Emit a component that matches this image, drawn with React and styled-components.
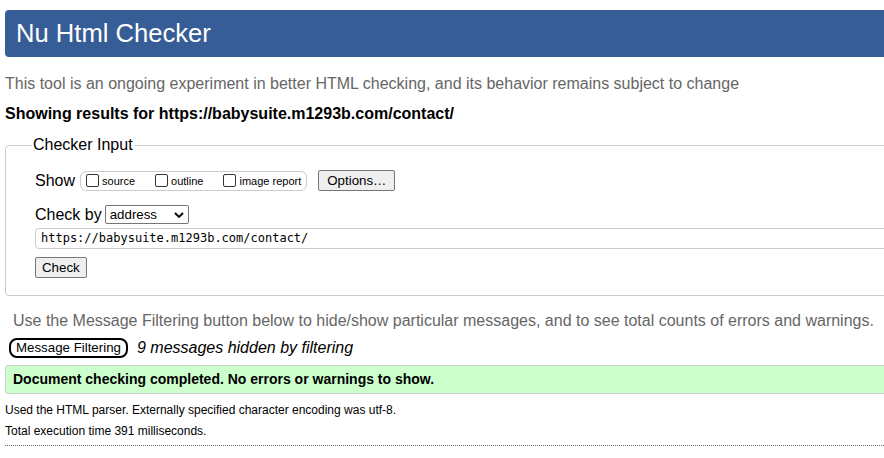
import React from 'react';
import styled, { createGlobalStyle } from 'styled-components';

const GlobalStyle = createGlobalStyle`
  html, body {
    margin: 0;
    padding: 0;
    background: #fff;
    overflow: hidden;
  }
  body {
    font-family: "Liberation Sans", Arial, sans-serif;
    color: #000;
  }
`;

const Page = styled.div`
  width: 940px;
  padding: 10px 0 0 5px;
`;

const Header = styled.h1`
  margin: 0;
  height: 47px;
  background: #365d95;
  border-radius: 4px;
  color: #fff;
  font-size: 25.6px;
  font-weight: normal;
  line-height: 47px;
  padding-left: 11px;
`;

const Intro = styled.p`
  margin: 18px 0 0;
  color: #666;
  font-size: 16px;
  line-height: 18px;
`;

const Results = styled.p`
  margin: 12px 0 0;
  font-weight: bold;
  font-size: 16px;
  line-height: 18px;
`;

const Fieldset = styled.fieldset`
  margin: 13px 0 0;
  border: 1px solid #ccc;
  border-radius: 4px;
  padding: 16px 0 17px 29px;
`;

const Legend = styled.legend`
  font-size: 16px;
  padding: 0 1px;
  margin-left: -3px;
`;

const Row = styled.div`
  display: flex;
  align-items: center;
  font-size: 16px;
  margin-top: ${p => p.$top || 0}px;
`;

const Label = styled.span`
  margin-right: 5px;
`;

const Group = styled.span`
  display: inline-flex;
  align-items: center;
  border: 1px solid #ccc;
  border-radius: 6px;
  height: 18px;
  padding: 0 5px 0 5px;
  margin-right: 11px;
`;

const Opt = styled.label`
  display: inline-flex;
  align-items: center;
  font-size: 11px;
  margin-right: ${p => p.$gap || 0}px;
`;

const Box = styled.span`
  width: 11px;
  height: 11px;
  border: 1px solid #333;
  border-radius: 2px;
  margin-right: 3px;
`;

const Button = styled.button`
  font-family: "Liberation Sans", Arial, sans-serif;
  font-size: 13.3px;
  color: #000;
  background: #efefef;
  border: 1px solid #767676;
  border-radius: 2px;
  padding: 1px ${p => p.$pad || 8}px;
  height: 21px;
  line-height: 17px;
`;

const Select = styled.div`
  display: inline-flex;
  align-items: center;
  justify-content: space-between;
  width: 78px;
  height: 17px;
  border: 1px solid #767676;
  border-radius: 2px;
  font-size: 13.3px;
  padding: 0 0 0 4px;
  box-sizing: content-box;
  margin-left: 3px;
  svg { margin-right: 4px; }
`;

const UrlInput = styled.div`
  height: 19px;
  border: 1px solid #ccc;
  border-radius: 4px;
  font-family: "DejaVu Sans Mono", "Liberation Mono", monospace;
  font-size: 12px;
  line-height: 19px;
  padding-left: 5px;
  margin-top: 4px;
`;

const Note = styled.p`
  margin: 16px 0 0 8px;
  color: #666;
  font-size: 16px;
  line-height: 18px;
`;

const FilterRow = styled.div`
  display: flex;
  align-items: center;
  margin: 8px 0 0 4px;
`;

const Pill = styled.span`
  font-size: 13.3px;
  border: 2px solid #000;
  border-radius: 8px;
  height: 16px;
  line-height: 16px;
  padding: 0 5px;
  margin-right: 9px;
`;

const Hidden = styled.em`
  font-size: 16px;
`;

const Success = styled.div`
  margin-top: 7px;
  height: 27px;
  background: #ccffcc;
  border: 1px solid #ccc;
  border-radius: 3px;
  font-weight: bold;
  font-size: 14px;
  line-height: 27px;
  padding-left: 7px;
`;

const Detail = styled.p`
  margin: ${p => p.$top}px 0 0;
  font-size: 12px;
  line-height: 14px;
`;

const Rule = styled.hr`
  margin: 7px 0 0;
  width: 879px;
  border: 0;
  border-top: 1px dotted #666;
`;

export default function App() {
  return (
    <>
      <GlobalStyle />
      <Page>
        <Header>Nu Html Checker</Header>
        <Intro>This tool is an ongoing experiment in better HTML checking, and its behavior remains subject to change</Intro>
        <Results>Showing results for https://babysuite.m1293b.com/contact/</Results>
        <Fieldset>
          <Legend>Checker Input</Legend>
          <Row $top={0}>
            <Label>Show</Label>
            <Group>
              <Opt $gap={20}><Box />source</Opt>
              <Opt $gap={20}><Box />outline</Opt>
              <Opt><Box />image report</Opt>
            </Group>
            <Button $pad={8}>Options…</Button>
          </Row>
          <Row $top={14}>
            <span>Check by</span>
            <Select>
              address
              <svg width="10" height="6" viewBox="0 0 10 6"><path d="M1 1l4 4 4-4" fill="none" stroke="#000" strokeWidth="1.8" /></svg>
            </Select>
          </Row>
          <UrlInput>https://babysuite.m1293b.com/contact/</UrlInput>
          <Row $top={8}>
            <Button $pad={6}>Check</Button>
          </Row>
        </Fieldset>
        <Note>Use the Message Filtering button below to hide/show particular messages, and to see total counts of errors and warnings.</Note>
        <FilterRow>
          <Pill>Message Filtering</Pill>
          <Hidden>9 messages hidden by filtering</Hidden>
        </FilterRow>
        <Success>Document checking completed. No errors or warnings to show.</Success>
        <Detail $top={9}>Used the HTML parser. Externally specified character encoding was utf-8.</Detail>
        <Detail $top={7}>Total execution time 391 milliseconds.</Detail>
        <Rule />
      </Page>
    </>
  );
}
